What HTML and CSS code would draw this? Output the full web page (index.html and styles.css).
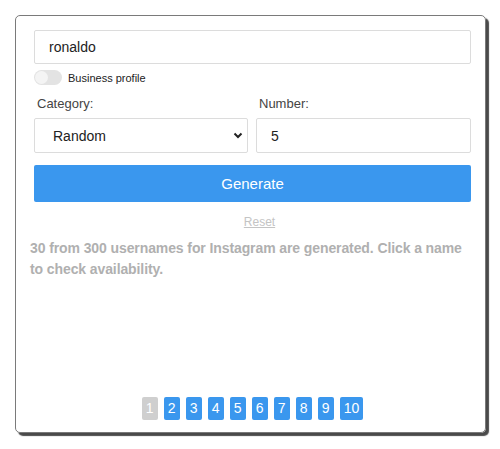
FILE: index.html
```html
<!DOCTYPE html>
<html lang="en">
<head>
    <meta charset="UTF-8">
    <meta name="viewport" content="width=device-width, initial-scale=1.0">
    <title>Instagram Username Generator</title>
    <link rel="stylesheet" href="styles.css">
</head>
<body>
    <div class="card">
        <input class="text-input" type="text" value="ronaldo">
        <div class="toggle-row">
            <span class="toggle"><span class="knob"></span></span>
            <span class="toggle-label">Business profile</span>
        </div>
        <div class="fields">
            <div class="field">
                <label>Category:</label>
                <div class="select">
                    <span>Random</span>
                    <svg width="10" height="7" viewBox="0 0 10 7"><path d="M1.5 1.5 L5 5 L8.5 1.5" fill="none" stroke="#222" stroke-width="2"/></svg>
                </div>
            </div>
            <div class="field">
                <label>Number:</label>
                <input class="text-input small" type="text" value="5">
            </div>
        </div>
        <button class="generate">Generate</button>
        <div class="reset-row"><a href="#" class="reset">Reset</a></div>
        <p class="message">30 from 300 usernames for Instagram are generated. Click a name to check availability.</p>
        <div class="pages">
            <span class="page current">1</span>
            <span class="page">2</span>
            <span class="page">3</span>
            <span class="page">4</span>
            <span class="page">5</span>
            <span class="page">6</span>
            <span class="page">7</span>
            <span class="page">8</span>
            <span class="page">9</span>
            <span class="page">10</span>
        </div>
    </div>
</body>
</html>
```

FILE: styles.css
```css
* {
    margin: 0;
    padding: 0;
    box-sizing: border-box;
}
body {
    font-family: 'Liberation Sans', Arial, sans-serif;
    background: white;
    color: #222;
}
.card {
    margin: 15px;
    width: 471px;
    height: 418px;
    border: 1px solid #7a7a7a;
    border-radius: 5px;
    box-shadow: 3px 3px 1px #4a4a4a;
    padding: 14px 14px 12px 18px;
    display: flex;
    flex-direction: column;
}
.text-input {
    width: 100%;
    height: 34px;
    border: 1px solid #dcdcdc;
    border-radius: 2px;
    padding: 0 14px;
    font-family: inherit;
    font-size: 14px;
    color: #222;
    outline: none;
}
.text-input.small {
    height: 35px;
    padding: 0 14px;
}
.toggle-row {
    display: flex;
    align-items: center;
    margin-top: 6px;
    height: 15px;
}
.toggle {
    width: 28px;
    height: 15px;
    border-radius: 8px;
    background: #e3e3e3;
    position: relative;
}
.knob {
    position: absolute;
    left: 1px;
    top: 1px;
    width: 13px;
    height: 13px;
    border-radius: 50%;
    background: #f4f4f4;
}
.toggle-label {
    font-size: 11px;
    margin-left: 6px;
    color: #222;
}
.fields {
    display: flex;
    gap: 8px;
    margin-top: 11px;
}
.field {
    flex: 1;
}
.fields .field:first-child {
    flex: 0 0 214px;
}
.field label {
    display: block;
    font-size: 13px;
    color: #444;
    padding-left: 3px;
    height: 22px;
    line-height: 16px;
}
.select {
    height: 35px;
    border: 1px solid #dcdcdc;
    border-radius: 2px;
    display: flex;
    align-items: center;
    justify-content: space-between;
    padding: 0 4px 0 18px;
    font-size: 14px;
}
.generate {
    margin-top: 12px;
    height: 37px;
    width: 437px;
    background: #3a97ee;
    color: white;
    border: none;
    border-radius: 2px;
    font-family: inherit;
    font-size: 15px;
}
.reset-row {
    text-align: center;
    margin-top: 10px;
    padding-left: 14px;
}
.reset {
    font-size: 12px;
    color: #c4c4c4;
    text-decoration: underline;
}
.message {
    margin-top: 8px;
    margin-left: -4px;
    font-size: 14px;
    font-weight: bold;
    line-height: 21px;
    letter-spacing: -0.1px;
    color: #b0b0b0;
}
.pages {
    margin-top: auto;
    display: flex;
    justify-content: center;
    gap: 6px;
}
.page {
    min-width: 16px;
    height: 23px;
    padding: 0 4px;
    border-radius: 2px;
    background: #3a97ee;
    color: white;
    font-size: 14px;
    line-height: 23px;
    text-align: center;
}
.page.current {
    background: #cfcfcf;
}
```
